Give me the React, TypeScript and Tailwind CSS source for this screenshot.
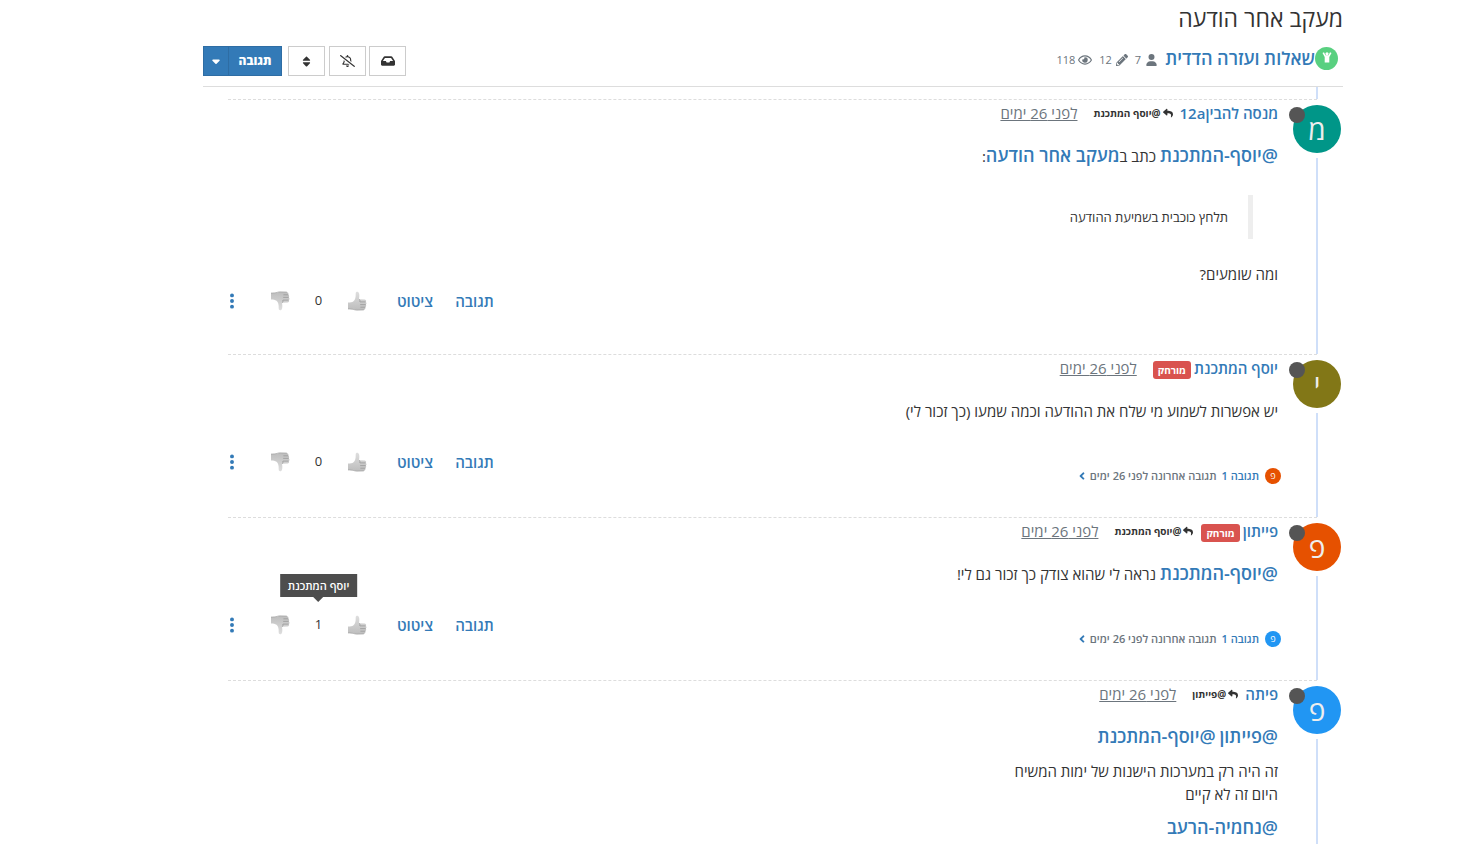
import type { ReactNode } from "react";
import { FaAngleLeft, FaInbox, FaPencilAlt, FaRegBellSlash, FaRegEye, FaReply, FaSort } from "react-icons/fa";
import { FaCaretDown, FaEllipsisVertical, FaUser } from "react-icons/fa6";

interface Post {
  id: number;
  user: string;
  letter: string;
  avatarColor: string;
  banned?: boolean;
  replyTo?: string;
  votes?: number;
  voter?: string;
  reply?: { letter: string; color: string };
  content: ReactNode;
}

const Mention = ({ children }: { children: ReactNode }) => (
  <a href="#" className="text-[18px] leading-none font-semibold text-[#337ab7]">
    {children}
  </a>
);

const Thumb = ({ down }: { down?: boolean }) => (
  <svg viewBox="0 0 20 20" className={`h-5 w-5 ${down ? "-scale-y-100" : ""}`}>
    <defs>
      <linearGradient id="thumb" x1="0" y1="0" x2="0" y2="1">
        <stop offset="0" stopColor="#dedede" />
        <stop offset="1" stopColor="#bdbdbd" />
      </linearGradient>
    </defs>
    <path
      d="M1 11.6 C3.500 11.500 5 11.200 6.500 10.200 C8.300 8.600 8.800 6.500 8.700 2.500 C8.700 .3 11.300 .2 12 2.300 C12.600 4.300 12.300 6.300 12 8.200 L17.800 8.400 C19.400 8.700 19.500 10.400 18.600 10.900 C19.800 11.300 19.800 13.100 18.700 13.600 C19.500 14.200 19.300 15.800 18.300 16.200 C18.800 17.200 18.200 18.600 16.800 18.900 L10 19.100 C7.500 19.100 6.500 17.900 1 17.900 Z"
      fill="url(#thumb)"
    />
    <path
      d="M13 10.900H18.600M13.200 13.600H18.700M13.400 16.200H18.300M12 8.200C13 8.700 13.200 10 12.600 11"
      stroke="#999999"
      strokeWidth=".8"
      fill="none"
    />
    <path d="M1 17.900C6.500 17.900 7.500 19.100 10 19.100L16.800 18.900" stroke="#a6a6a6" strokeWidth=".8" fill="none" />
  </svg>
);

const posts: Post[] = [
  {
    id: 1,
    user: "מנסה להבין12a",
    letter: "מ",
    avatarColor: "bg-[#009688]",
    replyTo: "@יוסף המתכנת",
    votes: 0,
    content: (
      <>
        <p>
          <Mention>@יוסף-המתכנת</Mention> כתב ב<Mention>מעקב אחר הודעה</Mention>:
        </p>
        <blockquote className="ms-[25px] mt-[27px] mb-6 border-s-[5px] border-[#eeeeee] py-[10px] ps-5 text-[13px] leading-6">
          תלחץ כוכבית בשמיעת ההודעה
        </blockquote>
        <p>ומה שומעים?</p>
      </>
    ),
  },
  {
    id: 2,
    user: "יוסף המתכנת",
    letter: "י",
    avatarColor: "bg-[#827717]",
    banned: true,
    votes: 0,
    reply: { letter: "פ", color: "bg-[#e65100]" },
    content: <p>יש אפשרות לשמוע מי שלח את ההודעה וכמה שמעו (כך זכור לי)</p>,
  },
  {
    id: 3,
    user: "פייתון",
    letter: "פ",
    avatarColor: "bg-[#e65100]",
    banned: true,
    replyTo: "@יוסף המתכנת",
    votes: 1,
    voter: "יוסף המתכנת",
    reply: { letter: "פ", color: "bg-[#2196f3]" },
    content: (
      <p>
        <Mention>@יוסף-המתכנת</Mention> נראה לי שהוא צודק כך זכור גם לי!
      </p>
    ),
  },
  {
    id: 4,
    user: "פיתה",
    letter: "פ",
    avatarColor: "bg-[#2196f3]",
    replyTo: "@פייתון",
    content: (
      <>
        <p>
          <Mention>@פייתון</Mention> <Mention>@יוסף-המתכנת</Mention>
        </p>
        <p className="mt-[11px]">
          זה היה רק במערכות הישנות של ימות המשיח
          <br />
          היום זה לא קיים
        </p>
        <p className="mt-[11px] pb-10">
          <Mention>@נחמיה-הרעב</Mention>
        </p>
      </>
    ),
  },
];

const PostFooter = ({ post }: { post: Post }) => (
  <div className="flex items-start justify-between">
    {post.reply ? (
      <a href="#" className="-ms-[3px] mt-[45px] flex h-4 items-center text-[11px] text-[#6c757d]">
        <span
          className={`me-[6px] flex h-4 w-4 items-center justify-center rounded-full text-[9px] text-white ${post.reply.color}`}
        >
          {post.reply.letter}
        </span>
        <span className="me-[5px] font-semibold text-[#337ab7]">תגובה 1</span>
        <span className="font-semibold">תגובה אחרונה לפני 26 ימים</span>
        <FaAngleLeft className="ms-1 h-3 w-2 text-[#337ab7]" />
      </a>
    ) : (
      <span />
    )}
    <div
      className={`flex items-center text-[15px] font-semibold text-[#337ab7] ${
        post.reply ? "mt-6 pb-10" : "pb-[38px]"
      }`}
    >
      <button className="h-[30px]">תגובה</button>
      <button className="ms-[22px] h-[30px]">ציטוט</button>
      <button className="ms-[30px]" aria-label="הצבעה בעד">
        <Thumb />
      </button>
      <span className="relative w-[57px] py-1 text-center text-[13px] font-normal text-[#333333]">
        {post.votes}
        {post.voter && (
          <span className="absolute bottom-[42px] left-1/2 -translate-x-1/2 bg-[#4d4d4d] px-2 text-[11px] leading-[23px] font-semibold whitespace-nowrap text-white">
            {post.voter}
            <span className="absolute top-full left-1/2 -translate-x-1/2 border-x-[5px] border-t-[5px] border-x-transparent border-t-[#4d4d4d]" />
          </span>
        )}
      </span>
      <button aria-label="הצבעה נגד">
        <Thumb down />
      </button>
      <button className="ms-[34px]" aria-label="עוד">
        <FaEllipsisVertical className="h-[18px] w-2" />
      </button>
    </div>
  </div>
);

const PostItem = ({ post }: { post: Post }) => (
  <li className="ms-[26px] me-[25px] flex border-t border-dashed border-[#dddddd]">
    <div className="-ms-6 flex w-12 flex-none flex-col items-center pt-[5px]">
      <div
        className={`relative flex h-12 w-12 flex-none items-center justify-center rounded-full text-[28px] text-[#eeeeee] ${post.avatarColor}`}
      >
        {post.letter}
        <span className="absolute -left-1 top-[2px] h-4 w-4 rounded-full bg-[#555555]" />
      </div>
      <div className="mt-[5px] w-[2px] flex-1 bg-[#cfdff9]" />
    </div>
    <div className="flex min-w-0 flex-1 flex-col ps-[15px]">
      <div className="flex h-[26px] items-center">
        <a href="#" className="me-[3px] text-[15px] font-semibold text-[#337ab7]">
          {post.user}
        </a>
        {post.banned && (
          <span className="mt-1 rounded-[3px] bg-[#d9534f] px-[5px] text-[10px] leading-[18px] font-bold text-white">
            מורחק
          </span>
        )}
        {post.replyTo && (
          <a
            href="#"
            className={`flex items-center gap-[2px] text-[10px] font-bold text-[#333333] ${post.banned ? "ms-2" : "ms-1"}`}
          >
            <FaReply className="h-[10px] w-[10px]" />
            {post.replyTo}
          </a>
        )}
        <a href="#" className="ms-4 text-[15px] text-[#6c757d] underline">
          לפני 26 ימים
        </a>
      </div>
      <div className="mt-[19px] text-[15px] leading-[23px]">{post.content}</div>
      {post.votes !== undefined && <PostFooter post={post} />}
    </div>
  </li>
);

const App = () => {
  return (
    <div
      dir="rtl"
      className="h-screen overflow-hidden bg-white ps-[138px] pe-[203px] font-['Open_Sans','Noto_Sans',sans-serif] text-[#333333]"
    >
      <h1 className="pt-[2px] text-[23px] leading-[32px]">מעקב אחר הודעה</h1>
      <div className="flex items-center border-b border-[#dddddd] pt-3 pb-[10px]">
        <span className="ms-[5px] mb-[6px] flex h-[23px] w-[23px] items-center justify-center rounded-full bg-[#59d080]">
          <svg viewBox="0 0 12 12" className="mb-[2px] h-3 w-3" fill="white">
            <circle cx="6" cy="2.800" r="1.600" />
            <path d="M1.500 2 L3 1.200 L4.500 4.300 H7.500 L9 1.200 L10.500 2 L8.300 6 V11.500 H3.700 V6 Z" />
          </svg>
        </span>
        <a href="#" className="mb-[6px] text-[18px] leading-[23px] font-semibold text-[#337ab7]">
          שאלות ועזרה הדדית
        </a>
        <div className="ms-2 mb-[2px] flex items-center gap-[7px] text-[11px] text-[#6c757d]">
          <span className="flex items-center gap-[5px]">
            <FaUser className="h-3 w-[11px]" />7
          </span>
          <span className="flex items-center gap-1">
            <FaPencilAlt className="h-3 w-3" />
            12
          </span>
          <span className="flex items-center gap-[3px]">
            <FaRegEye className="h-[14px] w-[14px]" />
            118
          </span>
        </div>
        <div className="ms-auto flex">
          <button className="flex h-[30px] w-[37px] items-center justify-center border border-[#cccccc]" aria-label="סמן">
            <FaInbox className="h-[14px] w-[14px]" />
          </button>
          <button className="ms-[3px] flex h-[30px] w-[37px] items-center justify-center border border-[#cccccc]" aria-label="מעקב">
            <FaRegBellSlash className="h-3 w-[15px]" />
          </button>
          <button className="ms-1 flex h-[30px] w-[37px] items-center justify-center border border-[#cccccc]" aria-label="מיון">
            <FaSort className="h-[13px] w-[13px]" />
          </button>
          <button className="ms-[6px] h-[30px] w-[54px] border border-[#2e6da4] bg-[#337ab7] text-[12px] font-extrabold text-white">
            תגובה
          </button>
          <button className="-ms-px flex h-[30px] w-[26px] items-center justify-center border border-[#2e6da4] bg-[#337ab7] text-white" aria-label="אפשרויות תגובה">
            <FaCaretDown className="h-3 w-3" />
          </button>
        </div>
      </div>
      <div className="ms-[25px] h-3 w-[2px] bg-[#cfdff9]" />
      <ul>
        {posts.map((post) => (
          <PostItem key={post.id} post={post} />
        ))}
      </ul>
    </div>
  );
};

export default App;
